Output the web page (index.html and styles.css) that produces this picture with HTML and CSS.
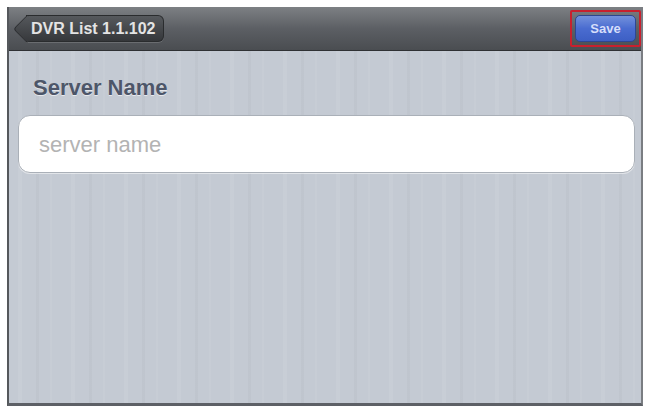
FILE: index.html
```html
<!DOCTYPE html>
<html lang="en">
<head>
  <meta charset="UTF-8">
  <title>Server Name</title>
  <link rel="stylesheet" href="styles.css">
</head>
<body>
  <div class="screen">
    <div class="navbar">
      <button class="back-button">DVR List 1.1.102</button>
      <div class="save-highlight">
        <button class="save-button">Save</button>
      </div>
    </div>

    <div class="content">
      <div class="section-title">Server Name</div>
      <input type="text" class="text-field" placeholder="server name">
    </div>
  </div>
</body>
</html>
```

FILE: styles.css
```css
body {
  margin: 0;
  background-color: #fff;
  font-family: "Liberation Sans", Arial, sans-serif;
}

.screen {
  margin: 7px 5px 3px 7px;
  height: 399px;
  display: flex;
  flex-direction: column;
  border-left: 2px solid #55585c;
  border-right: 2px solid #7a7d82;
  border-bottom: 3px solid #5d6066;
  box-sizing: border-box;
}

.navbar {
  height: 43px;
  display: flex;
  align-items: center;
  justify-content: space-between;
  padding: 0 0 0 5px;
  background: linear-gradient(#7d8084, #5c5f64 50%, #4a4d51);
  border-bottom: 1px solid #2f3134;
}

.back-button {
  position: relative;
  z-index: 1;
  height: 27px;
  margin-left: 12px;
  padding: 0 7px 0 5px;
  background: linear-gradient(#56595d, #35373a);
  border: 1px solid #2a2c2e;
  border-left: none;
  border-radius: 0 6px 6px 0;
  color: #e4e4e4;
  font-family: inherit;
  font-size: 16px;
  font-weight: bold;
  box-shadow: 0 1px 0 rgba(255,255,255,0.15);
}

.back-button::before {
  content: "";
  position: absolute;
  left: -9px;
  top: 3px;
  width: 19px;
  height: 19px;
  background: linear-gradient(135deg, #56595d, #35373a);
  border-left: 1px solid #2a2c2e;
  border-bottom: 1px solid #2a2c2e;
  transform: rotate(45deg);
  border-radius: 0 0 0 4px;
  z-index: -1;
}

.save-highlight {
  padding: 3px;
  border: 2px solid #c8202e;
  border-radius: 2px;
}

.save-button {
  height: 27px;
  width: 61px;
  background: linear-gradient(#7391dc, #4a6cd0 50%, #3d5fc4);
  border: 1px solid #2e4690;
  border-radius: 5px;
  color: #d6defa;
  font-family: inherit;
  font-size: 13px;
  font-weight: bold;
}

.content {
  flex: 1;
  padding: 24px 6px 0 9px;
  background-color: #c4cad3;
  background-image: repeating-linear-gradient(90deg,
    rgba(255,255,255,0) 0px, rgba(255,255,255,0) 9px,
    rgba(255,255,255,0.07) 9px, rgba(255,255,255,0.07) 13px,
    rgba(0,0,0,0) 13px, rgba(0,0,0,0) 27px,
    rgba(0,0,0,0.025) 27px, rgba(0,0,0,0.025) 30px,
    rgba(255,255,255,0) 30px, rgba(255,255,255,0) 41px,
    rgba(255,255,255,0.05) 41px, rgba(255,255,255,0.05) 43px,
    rgba(0,0,0,0) 43px, rgba(0,0,0,0) 53px);
}

.section-title {
  margin-left: 15px;
  font-size: 22px;
  font-weight: bold;
  color: #4d5669;
  text-shadow: 0 1px 0 rgba(255,255,255,0.6);
}

.text-field {
  display: block;
  margin-top: 14px;
  width: 100%;
  height: 58px;
  padding: 2px 20px 0;
  box-sizing: border-box;
  border: 1px solid #aab0b8;
  border-radius: 12px;
  background-color: #fff;
  font-family: inherit;
  font-size: 22px;
  color: #333;
  box-shadow: 0 1px 0 rgba(255,255,255,0.5);
}

.text-field::placeholder {
  color: #b3b3b3;
}
```
